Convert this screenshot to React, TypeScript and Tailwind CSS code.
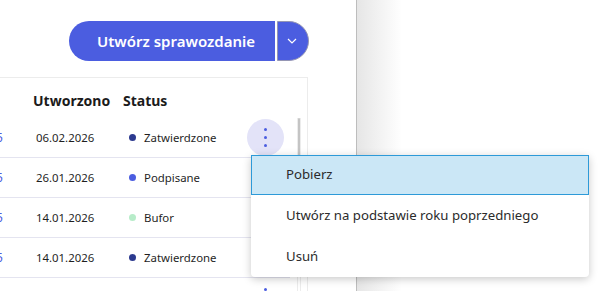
import React from "react";

const rows = [
  { date: "06.02.2026", status: "Zatwierdzone", dot: "bg-[#2c3a8f]" },
  { date: "26.01.2026", status: "Podpisane", dot: "bg-[#4b5de0]" },
  { date: "14.01.2026", status: "Bufor", dot: "bg-[#b7ecc9]" },
  { date: "14.01.2026", status: "Zatwierdzone", dot: "bg-[#2c3a8f]" },
  { date: "10.01.2026", status: "Podpisane", dot: "bg-[#4b5de0]" },
];

function Kebab({ bg }: { bg: boolean }) {
  return (
    <div
      className={
        "flex h-[37px] w-[37px] flex-col items-center justify-center gap-[4.5px] rounded-full " +
        (bg ? "bg-[#e3e3f8]" : "")
      }
    >
      <span className="h-[3.5px] w-[3.5px] rounded-full bg-[#4b5de0]" />
      <span className="h-[3.5px] w-[3.5px] rounded-full bg-[#4b5de0]" />
      <span className="h-[3.5px] w-[3.5px] rounded-full bg-[#4b5de0]" />
    </div>
  );
}

export default function App() {
  return (
    <div className="relative flex h-[291px] w-[614px] overflow-hidden bg-white font-['Noto_Sans',sans-serif]">
      <div className="relative w-[357px] shrink-0 overflow-hidden border-r border-[#bdbdbd] bg-white">
        <div className="flex justify-end pr-[47px] pt-[21px]">
          <div className="flex h-[40px]">
            <div className="flex h-[40px] w-[206px] items-center rounded-l-full bg-[#4b5de0] pl-[28px] text-[15px] font-semibold text-white">
              Utwórz sprawozdanie
            </div>
            <div className="w-[2px]" />
            <div className="flex h-[40px] w-[32px] items-center justify-center rounded-r-full border border-[#9596b4] bg-[#4b5de0] pr-[3px]">
              <svg width="10" height="6" viewBox="0 0 10 6" fill="none">
                <polyline points="1,1 5,5 9,1" stroke="white" strokeWidth="1.2" />
              </svg>
            </div>
          </div>
        </div>

        <div className="mr-[48px] ml-[-67px] mt-[16px] border border-[#ececec]">
          <div className="flex h-[40px] pt-[12px] text-[14px] font-bold text-[#1b1b1b]">
            <div className="w-[69px]" />
            <div className="w-[110px] pl-[30px]">Utworzono</div>
            <div className="pl-[10px]">Status</div>
          </div>
          <div className="flex">
            <div className="flex-1">
              {rows.map((r, i) => (
                <div key={i} className="flex h-[40px] items-center border-b border-[#e4e4f0] text-[11.4px] text-[#1f1f1f]">
                  <div className="w-[69px] pr-[0px] text-right text-[12px] text-[#4b5de0]">2025</div>
                  <div className="w-[110px] pl-[33px]">{r.date}</div>
                  <div className="flex flex-1 items-center pl-[16px]">
                    <span className={"mr-[8px] h-[7px] w-[7px] rounded-full " + r.dot} />
                    {r.status}
                  </div>
                  <div className="pr-[6px]">
                    <Kebab bg={i === 0} />
                  </div>
                </div>
              ))}
            </div>
            <div className="w-[7px]" />
            <div className="w-[4px] border-x border-[#ececec]">
              <div className="h-[80px] rounded-full bg-[#c4c4c4]" />
            </div>
            <div className="w-[6px]" />
          </div>
        </div>
      </div>

      <div className="flex-1">
        <div className="h-full w-[45px] bg-linear-to-r from-[#e6e6e6] to-white" />
      </div>

      <div className="absolute left-[251px] top-[155px] w-[338px] rounded-[4px] bg-white text-[13.2px] text-[#2b2b2b] shadow-[0_2px_8px_rgba(0,0,0,0.22)]">
        <div className="flex h-[40px] items-center border border-[#2d9ad8] bg-[#cbe7f6] pl-[34px]">Pobierz</div>
        <div className="flex h-[41px] items-center pl-[35px]">Utwórz na podstawie roku poprzedniego</div>
        <div className="flex h-[41px] items-center pl-[35px]">Usuń</div>
      </div>
    </div>
  );
}
